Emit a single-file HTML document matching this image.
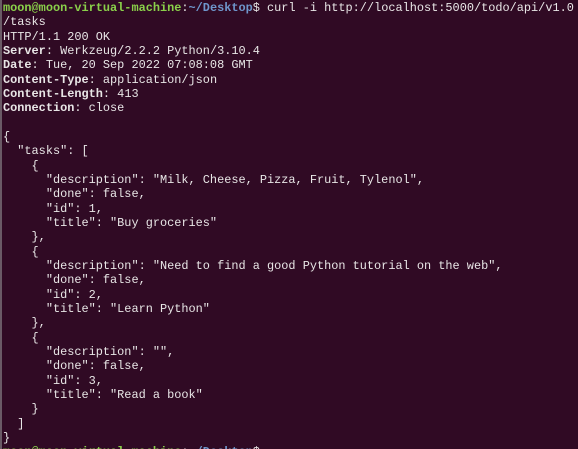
<!DOCTYPE html>
<html><head><style>
html,body{margin:0;padding:0;overflow:hidden;width:578px;height:449px;}
body{background:#300a24;position:relative;}
pre{margin:0;position:absolute;left:3px;top:1px;font-family:"Liberation Mono",monospace;font-size:11.9px;line-height:14.33px;color:#e8e6e6;white-space:pre;}
.g{color:#8ad04a;font-weight:bold;}
.b{color:#6f97cc;font-weight:bold;}
.w{font-weight:bold;}
.edge{position:absolute;left:0;top:0;width:2px;height:449px;background:#6a5a66;}
</style></head><body>
<div class="edge"></div>
<pre><span class="g">moon@moon-virtual-machine</span>:<span class="b">~/Desktop</span>$ curl -i http://localhost:5000/todo/api/v1.0
/tasks
HTTP/1.1 200 OK
<span class="w">Server</span>: Werkzeug/2.2.2 Python/3.10.4
<span class="w">Date</span>: Tue, 20 Sep 2022 07:08:08 GMT
<span class="w">Content-Type</span>: application/json
<span class="w">Content-Length</span>: 413
<span class="w">Connection</span>: close

{
  "tasks": [
    {
      "description": "Milk, Cheese, Pizza, Fruit, Tylenol",
      "done": false,
      "id": 1,
      "title": "Buy groceries"
    },
    {
      "description": "Need to find a good Python tutorial on the web",
      "done": false,
      "id": 2,
      "title": "Learn Python"
    },
    {
      "description": "",
      "done": false,
      "id": 3,
      "title": "Read a book"
    }
  ]
}
<span class="g">moon@moon-virtual-machine</span>:<span class="b">~/Desktop</span>$ </pre>
</body></html>
